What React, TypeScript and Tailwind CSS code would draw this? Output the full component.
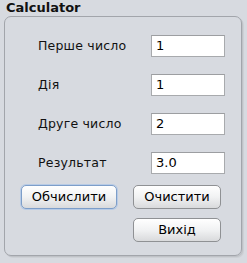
const rows = [
  { label: 'Перше число', value: '1' },
  { label: 'Дія', value: '1' },
  { label: 'Друге число', value: '2' },
  { label: 'Результат', value: '3.0' },
];

function Btn({ label, focused, w }: { label: string; focused?: boolean; w: string }) {
  return (
    <button
      className={`${w} h-[24px] rounded-[5px] border bg-gradient-to-b from-[#ffffff] via-[#f1f2f3] to-[#d9dadc] text-[13px] text-black ${
        focused ? 'border-[#7d9ec9] shadow-[0_0_0_1px_#b7cbe6]' : 'border-[#8f9194]'
      }`}
    >
      {label}
    </button>
  );
}

export default function App() {
  return (
    <div className="w-[247px] h-[263px] bg-[#d7dae0] overflow-hidden font-['DejaVu_Sans',sans-serif]">
      <div className="pl-[6px] h-[16px] text-[13px] leading-[15px] font-bold text-[#111]">Calculator</div>

      {/* Panel */}
      <div className="ml-[4px] w-[238px] h-[240px] rounded-[7px] border border-[#a2a5ab] shadow-[1px_1px_0_#bfc2c7,2px_2px_0_#cdd0d5]">
        <div className="flex flex-col gap-[17px] pt-[18px]">
          {rows.map((r) => (
            <div key={r.label} className="flex items-center h-[22px]">
              <span className="w-[146px] pl-[33px] text-[12.5px] tracking-[0.2px] text-[#111]">{r.label}</span>
              <div className="w-[74px] h-[22px] bg-white border border-[#a8aaad] border-t-[#9c9ea1] flex items-center pl-[4px] text-[13px] text-black">
                {r.value}
              </div>
            </div>
          ))}
        </div>

        <div className="grid grid-cols-[96px_88px] gap-x-[16px] gap-y-[9px] pl-[16px] mt-[11px]">
          <Btn label="Обчислити" focused w="w-[96px]" />
          <Btn label="Очистити" w="w-[88px]" />
          <div />
          <Btn label="Вихід" w="w-[88px]" />
        </div>
      </div>
    </div>
  );
}
